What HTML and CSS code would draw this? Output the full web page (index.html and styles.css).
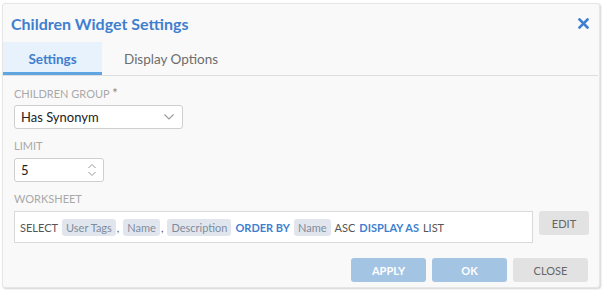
FILE: index.html
```html
<!DOCTYPE html>
<html lang="en">
<head>
    <meta charset="UTF-8">
    <title>Children Widget Settings</title>
    <link rel="stylesheet" href="styles.css">
</head>
<body>
    <div class="dialog">
        <div class="dialog-header">
            <div class="dialog-title">Children Widget Settings</div>
            <div class="close-btn">
                <svg width="11" height="11" viewBox="0 0 11 11"><path d="M1.5 1.5L9.5 9.5M9.5 1.5L1.5 9.5" stroke="#3f7fcf" stroke-width="2.6" stroke-linecap="square"/></svg>
            </div>
        </div>

        <div class="tabs">
            <div class="tab active">Settings</div>
            <div class="tab">Display Options</div>
        </div>

        <div class="dialog-body">
            <div class="field">
                <div class="field-label">Children Group <span class="required">*</span></div>
                <div class="select-box">
                    <span>Has Synonym</span>
                    <svg width="12" height="8" viewBox="0 0 12 8"><path d="M1.5 1.5L6 6L10.5 1.5" fill="none" stroke="#999" stroke-width="1.1"/></svg>
                </div>
            </div>

            <div class="field">
                <div class="field-label">Limit</div>
                <div class="number-box">
                    <span>5</span>
                    <svg width="10" height="16" viewBox="0 0 10 16"><path d="M1.5 6L5 2.5L8.5 6M1.5 10L5 13.5L8.5 10" fill="none" stroke="#999" stroke-width="1"/></svg>
                </div>
            </div>

            <div class="field">
                <div class="field-label">Worksheet</div>
                <div class="worksheet-row">
                    <div class="worksheet-box">
                        <span class="kw">SELECT</span>
                        <span class="tag">User Tags</span><span class="sep">,</span>
                        <span class="tag">Name</span><span class="sep">,</span>
                        <span class="tag">Description</span>
                        <span class="kw blue">ORDER BY</span>
                        <span class="tag">Name</span>
                        <span class="kw">ASC</span>
                        <span class="kw blue">DISPLAY AS</span>
                        <span class="kw">LIST</span>
                    </div>
                    <div class="btn btn-gray btn-edit">EDIT</div>
                </div>
            </div>
        </div>

        <div class="dialog-footer">
            <div class="btn btn-blue">APPLY</div>
            <div class="btn btn-blue">OK</div>
            <div class="btn btn-gray">CLOSE</div>
        </div>
    </div>
</body>
</html>
```

FILE: styles.css
```css
* {
    margin: 0;
    padding: 0;
    box-sizing: border-box;
    font-family: Lato, "Open Sans", Arial, sans-serif;
}

body {
    background-color: #fff;
    padding: 3px 3px 2px 2px;
}

.dialog {
    width: 598px;
    height: 285px;
    background-color: #f9f9f9;
    border: 1px solid #e6e6e6;
    border-radius: 3px;
    box-shadow: 1px 1px 2px rgba(0, 0, 0, 0.18);
    display: flex;
    flex-direction: column;
}

.dialog-header {
    height: 38px;
    display: flex;
    align-items: center;
    justify-content: space-between;
    padding: 0 10px 0 8px;
}

.dialog-title {
    color: #3f7fcf;
    font-size: 16px;
    font-weight: bold;
}

.close-btn {
    display: flex;
    margin-top: 1px;
}

.tabs {
    display: flex;
    height: 34px;
    border-bottom: 1px solid #dedede;
    margin-right: 1px;
}

.tab {
    display: flex;
    align-items: center;
    font-size: 13.5px;
    color: #6d6d6d;
    padding-left: 22px;
    padding-top: 1px;
}

.tab.active {
    width: 99px;
    padding-left: 0;
    justify-content: center;
    background-color: #e7f2fc;
    border-bottom: 3px solid #5fa5e0;
    color: #3f7fcf;
    font-weight: bold;
    padding-top: 4px;
}

.dialog-body {
    padding: 9px 8px 0 11px;
    flex: 1;
}

.field {
    margin-bottom: 9px;
}

.field-label {
    font-size: 11px;
    color: #a9a9a9;
    text-transform: uppercase;
    height: 20px;
    line-height: 16px;
}

.required {
    color: #888;
    font-size: 13px;
}

.select-box {
    width: 169px;
    height: 24px;
    background-color: #fff;
    border: 1px solid #cfcfcf;
    border-radius: 3px;
    display: flex;
    align-items: center;
    justify-content: space-between;
    padding: 0 7px 0 6px;
    font-size: 13px;
    color: #222;
}

.number-box {
    width: 90px;
    height: 24px;
    background-color: #fff;
    border: 1px solid #cfcfcf;
    border-radius: 3px;
    display: flex;
    align-items: center;
    justify-content: space-between;
    padding: 0 6px 0 6px;
    font-size: 13px;
    color: #222;
}

.worksheet-row {
    display: flex;
    align-items: flex-start;
    gap: 6px;
}

.worksheet-box {
    width: 519px;
    flex-shrink: 0;
    height: 32px;
    background-color: #fff;
    border: 1px solid #d9d9d9;
    display: flex;
    align-items: center;
    gap: 4px;
    padding: 0 5px;
    font-size: 11px;
    color: #555;
}

.kw {
    color: #555;
}

.kw.blue {
    color: #3f7fcf;
    font-weight: bold;
}

.tag {
    background-color: #e1e6ee;
    color: #7f8c9c;
    border-radius: 3px;
    padding: 2px 4px;
}

.sep {
    margin-left: -3px;
}

.btn {
    height: 24px;
    width: 75px;
    flex-shrink: 0;
    display: flex;
    align-items: center;
    justify-content: center;
    border-radius: 3px;
    font-size: 11px;
}

.btn-gray {
    background-color: #e2e2e2;
    color: #666;
}

.btn-blue {
    background-color: #a4c4e4;
    color: #fff;
    font-weight: bold;
}

.btn-edit {
    width: 50px;
}

.dialog-footer {
    display: flex;
    justify-content: flex-end;
    gap: 6px;
    padding: 0 11px 5px 0;
}
```
